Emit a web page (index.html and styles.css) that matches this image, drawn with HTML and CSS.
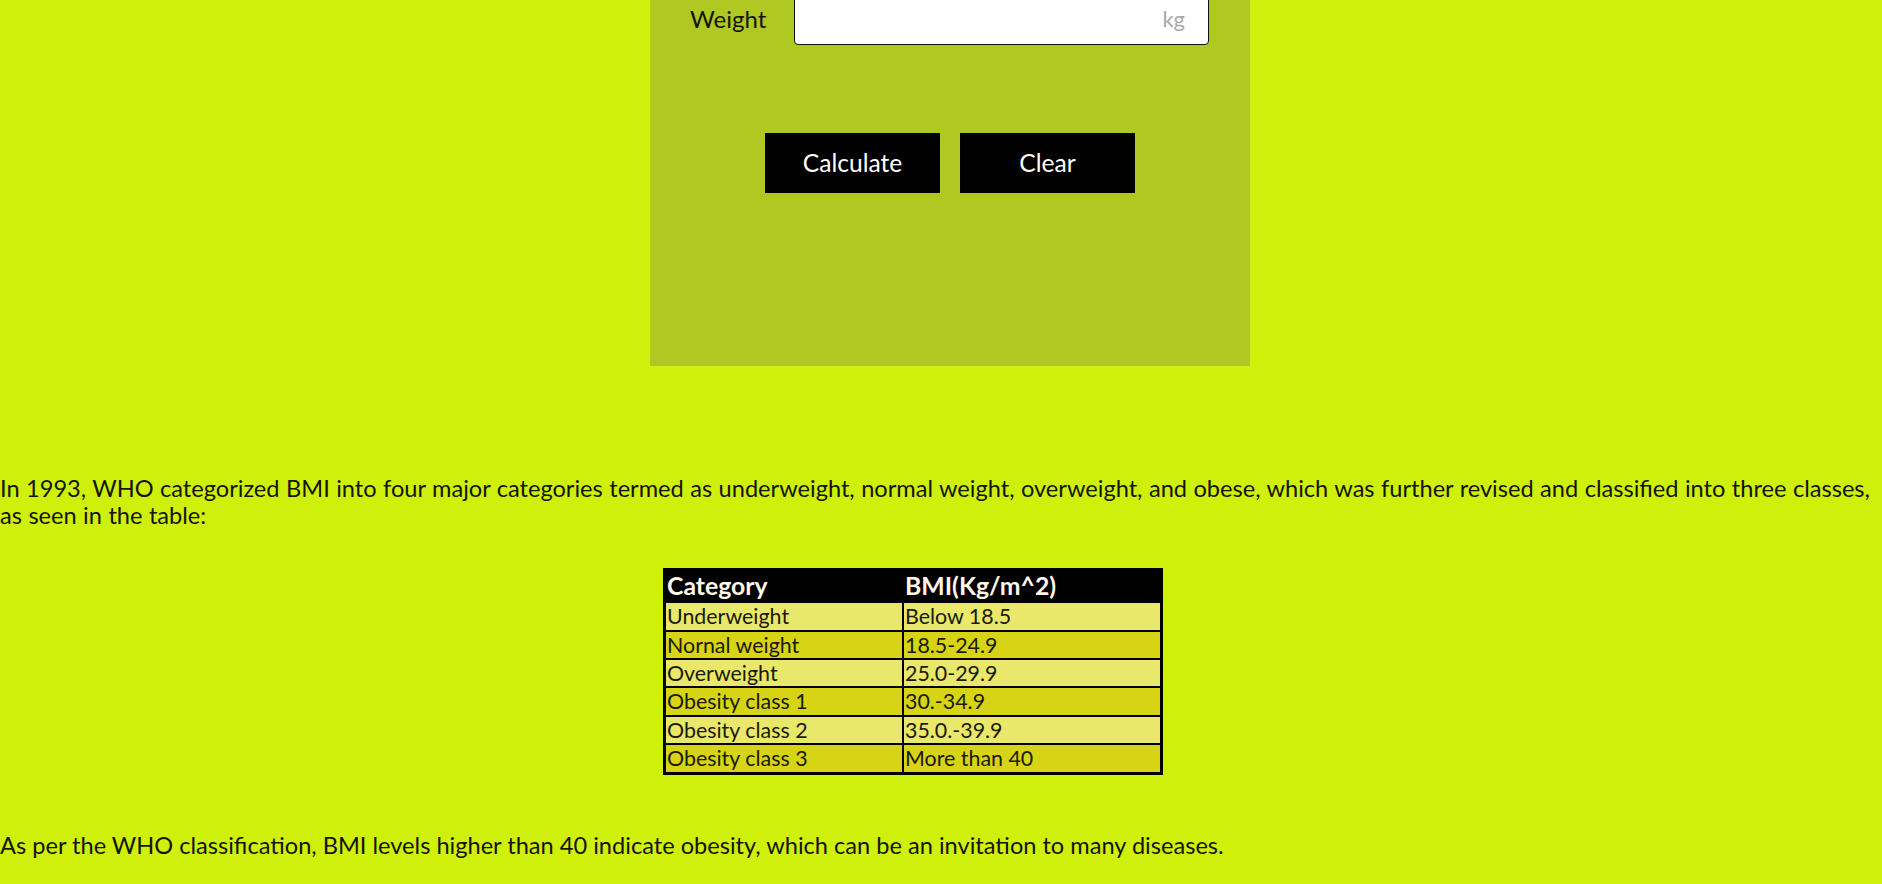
FILE: index.html
```html
<!DOCTYPE html>
<html lang="en">
<head>
<meta charset="utf-8">
<title>BMI Calculator</title>
<link rel="stylesheet" href="styles.css">
</head>
<body>
<div class="panel">
  <div class="field-row">
    <label class="field-label" for="weight">Weight</label>
    <div class="input-wrap">
      <input class="field-input" id="weight" type="text">
      <span class="unit">kg</span>
    </div>
  </div>
  <div class="actions">
    <button class="btn" type="button">Calculate</button>
    <button class="btn" type="button">Clear</button>
  </div>
</div>

<p class="text intro">In 1993, WHO categorized BMI into four major categories termed as underweight, normal weight, overweight, and obese, which was further revised and classified into three classes, as seen in the table:</p>

<table class="bmi-table">
  <thead>
    <tr><th class="col1">Category</th><th>BMI(Kg/m^2)</th></tr>
  </thead>
  <tbody>
    <tr class="light"><td>Underweight</td><td>Below 18.5</td></tr>
    <tr class="dark"><td>Nornal weight</td><td>18.5-24.9</td></tr>
    <tr class="light"><td>Overweight</td><td>25.0-29.9</td></tr>
    <tr class="dark"><td>Obesity class 1</td><td>30.-34.9</td></tr>
    <tr class="light"><td>Obesity class 2</td><td>35.0.-39.9</td></tr>
    <tr class="dark"><td>Obesity class 3</td><td>More than 40</td></tr>
  </tbody>
</table>

<p class="text outro">As per the WHO classification, BMI levels higher than 40 indicate obesity, which can be an invitation to many diseases.</p>
</body>
</html>
```
FILE: styles.css
```css
html, body {
  margin: 0;
  padding: 0;
}
body {
  background: #cff00b;
  font-family: Lato, "Noto Sans", sans-serif;
  color: #151505;
  overflow: hidden;
}
.panel {
  width: 600px;
  height: 371px;
  margin: -5px 0 0 650px;
  background: #afc822;
  box-sizing: border-box;
  display: flex;
  flex-direction: column;
}
.field-row {
  display: flex;
  align-items: center;
  padding-left: 40px;
}
.field-label {
  font-size: 24px;
  width: 104px;
  color: #151505;
  margin-top: -4px;
}
.input-wrap {
  position: relative;
  width: 415px;
  height: 50px;
}
.field-input {
  width: 100%;
  height: 100%;
  box-sizing: border-box;
  border: 1px solid #111;
  border-radius: 4px;
  background: #fff;
  padding: 0 50px 0 10px;
  font-family: inherit;
  font-size: 22px;
}
.unit {
  position: absolute;
  right: 24px;
  top: 10px;
  font-size: 22px;
  color: #a9a9a9;
}
.actions {
  display: flex;
  justify-content: center;
  gap: 20px;
  margin-top: 88px;
}
.btn {
  width: 175px;
  height: 60px;
  border: none;
  background: #000;
  color: #fff;
  font-family: inherit;
  font-size: 24.6px;
  padding: 0 0 2px;
}
.text {
  margin: 0;
  font-size: 23.6px;
  line-height: 26.6px;
  color: #151505;
}
.intro {
  margin-top: 109px;
  word-spacing: 0.4px;
}
.bmi-table {
  margin: 40px 0 0 663px;
  width: 500px;
  background: #000;
  border: 1px solid #000;
  border-spacing: 2px;
}
.bmi-table th {
  text-align: left;
  color: #fff8ea;
  font-size: 24.8px;
  font-weight: 700;
  padding: 1px;
  height: 30px;
  line-height: 28px;
  box-sizing: border-box;
}
.bmi-table .col1 {
  width: 236px;
}
.bmi-table td {
  font-size: 21.4px;
  line-height: 24.4px;
  padding: 1px;
  color: #1a1a05;
}
.bmi-table .light td {
  background: #e9e86a;
}
.bmi-table .dark td {
  background: #d7d415;
}
.outro {
  margin-top: 57px;
}
```
